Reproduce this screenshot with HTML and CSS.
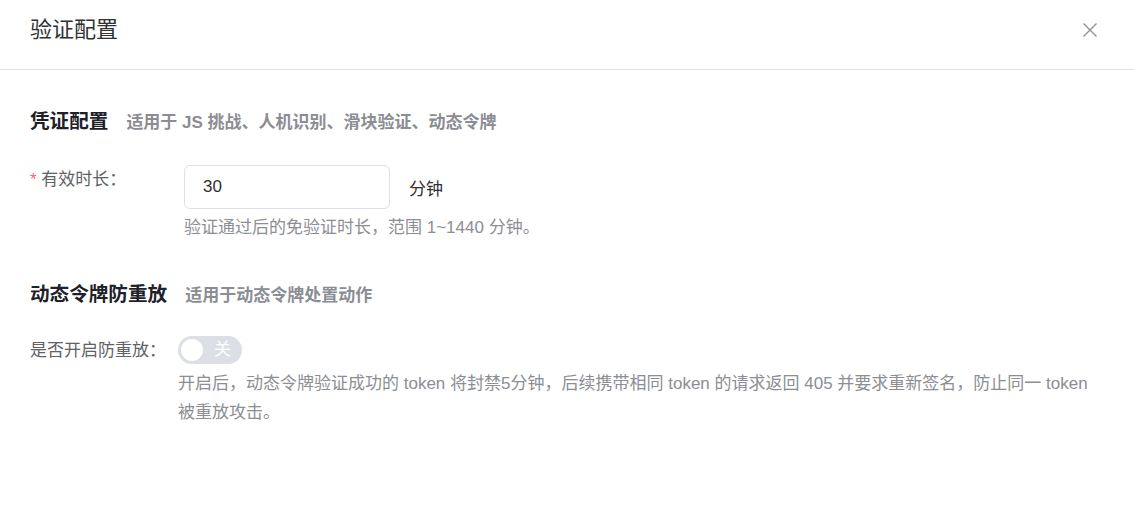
FILE: index.html
```html
<!DOCTYPE html>
<html>
<head>
	<meta charset="utf-8">
	<title>验证配置</title>
	<link rel="stylesheet" href="styles.css">
</head>
<body>
	<div class="dialog">
		<div class="dialoghead">
			<span class="dialogtitle">验证配置</span>
			<span class="closebtn">
				<svg width="16" height="16" viewBox="0 0 16 16"><path d="M1.5 1.5 L14.5 14.5 M14.5 1.5 L1.5 14.5" stroke="#8f9298" stroke-width="1.4" fill="none"/></svg>
			</span>
		</div>
		<div class="dialogbody">
			<div class="sectionhead first">
				<span class="sectiontitle">凭证配置</span>
				<span class="sectionsub">适用于 JS 挑战、人机识别、滑块验证、动态令牌</span>
			</div>
			<div class="formitem">
				<div class="formlabel wide"><span class="req">*</span> 有效时长：</div>
				<div class="formcontent">
					<div class="inputrow">
						<div class="inputbox">30</div>
						<span class="unit">分钟</span>
					</div>
					<div class="helptext">验证通过后的免验证时长，范围 1~1440 分钟。</div>
				</div>
			</div>

			<div class="sectionhead second">
				<span class="sectiontitle">动态令牌防重放</span>
				<span class="sectionsub">适用于动态令牌处置动作</span>
			</div>
			<div class="formitem switchitem">
				<div class="formlabel narrow">是否开启防重放：</div>
				<div class="formcontent">
					<div class="switch">
						<span class="knob"></span>
						<span class="switchtext">关</span>
					</div>
					<div class="helptext long">开启后，动态令牌验证成功的 token 将封禁5分钟，后续携带相同 token 的请求返回 405 并要求重新签名，防止同一 token 被重放攻击。</div>
				</div>
			</div>
		</div>
	</div>
</body>
</html>
```

FILE: styles.css
```css
body {
	margin: 0px;
	background: #ffffff;
	font-family: "Liberation Sans", "Noto Sans CJK SC", sans-serif;
	font-size: 17px;
	color: #303133;
}

.dialoghead {
	display: flex;
	justify-content: space-between;
	align-items: center;
	padding: 15px 36px 24px 30px;
	border-bottom: 1px solid #dcdfe6;
}
.dialogtitle {
	font-size: 22px;
	line-height: 30px;
	color: #303133;
}
.closebtn {
	display: flex;
	width: 16px;
	height: 16px;
}

.dialogbody {
	padding: 0 30px;
}

.sectionhead {
	display: flex;
	align-items: baseline;
	gap: 18px;
	line-height: 28px;
}
.sectionhead.first {
	margin-top: 37px;
}
.sectionhead.second {
	margin-top: 38px;
}
.sectiontitle {
	font-size: 19.6px;
	font-weight: bold;
	color: #1d2129;
}
.sectionsub {
	font-size: 17px;
	font-weight: bold;
	color: #8a8d93;
}

.formitem {
	display: flex;
	margin-top: 28px;
}
.switchitem {
	margin-top: 26px;
}
.formlabel {
	flex: none;
	line-height: 30px;
	color: #606266;
}
.formlabel.wide {
	width: 154px;
}
.formlabel.narrow {
	width: 148px;
}
.req {
	color: #f56c6c;
}
.formcontent {
	flex: 1;
}

.inputrow {
	display: flex;
	align-items: center;
	gap: 19px;
}
.inputbox {
	width: 206px;
	height: 44px;
	box-sizing: border-box;
	border: 1px solid #dcdfe6;
	border-radius: 6px;
	padding: 0 18px;
	line-height: 42px;
	color: #303133;
}
.unit {
	color: #303133;
}

.helptext {
	margin-top: 4px;
	line-height: 29px;
	color: #8c8e93;
}
.helptext.long {
	margin-top: 5px;
	max-width: 916px;
}

.switch {
	display: flex;
	align-items: center;
	width: 64px;
	height: 28px;
	box-sizing: border-box;
	padding: 0 3px;
	border-radius: 14px;
	background: #dcdfe6;
	gap: 11px;
}
.knob {
	width: 22px;
	height: 22px;
	border-radius: 50%;
	background: #ffffff;
}
.switchtext {
	color: #ffffff;
	font-size: 17px;
	line-height: 28px;
}
```
